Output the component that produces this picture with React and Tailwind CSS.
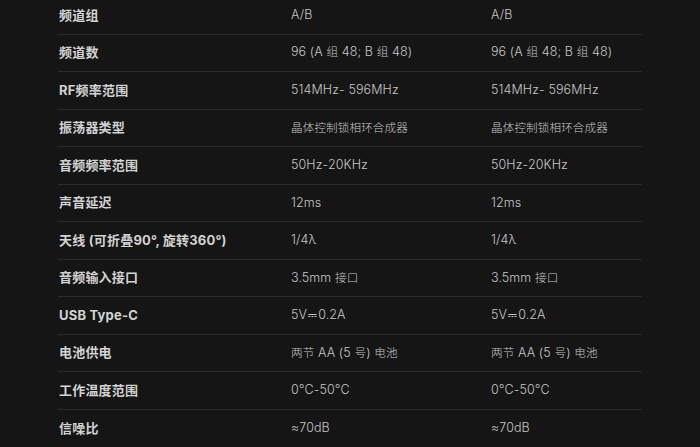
import React from "react";

const rows = [
  ["频道组", "A/B", "A/B"],
  ["频道数", "96 (A 组 48;  B 组 48)", "96 (A 组 48;  B 组 48)"],
  ["RF频率范围", "514MHz- 596MHz", "514MHz- 596MHz"],
  ["振荡器类型", "晶体控制锁相环合成器", "晶体控制锁相环合成器"],
  ["音频频率范围", "50Hz-20KHz", "50Hz-20KHz"],
  ["声音延迟", "12ms", "12ms"],
  ["天线 (可折叠90°, 旋转360°)", "1/4λ", "1/4λ"],
  ["音频输入接口", "3.5mm 接口", "3.5mm 接口"],
  ["USB Type-C", "5V⎓0.2A", "5V⎓0.2A"],
  ["电池供电", "两节 AA (5 号) 电池", "两节 AA (5 号) 电池"],
  ["工作温度范围", "0°C-50°C", "0°C-50°C"],
  ["信噪比", "≈70dB", "≈70dB"],
];

function Value({ text }) {
  const parts = text.split(/([\u4e00-\u9fff]+|⎓)/).filter((p) => p.length);
  return (
    <>
      {parts.map((p, i) =>
        p === "⎓" ? (
          <span key={i} className="font-['DejaVu_Sans'] text-[11px] px-[1px]">
            {p}
          </span>
        ) : /[\u4e00-\u9fff]/.test(p) ? (
          <span key={i} className="text-[11.6px]">
            {p}
          </span>
        ) : (
          <span key={i}>{p}</span>
        )
      )}
    </>
  );
}

export default function App() {
  return (
    <div
      className="w-[700px] h-[447px] overflow-hidden bg-[#151515]"
      style={{ fontFamily: 'Inter, "Noto Sans CJK SC", sans-serif' }}
    >
      <div className="ml-[58px] w-[584px] -mt-[3px]">
        {rows.map((r, i) => (
          <div
            key={i}
            className={
              "flex items-center h-[37.55px] " +
              (i < rows.length - 1 ? "border-b border-[#2c2c2c]" : "")
            }
          >
            <div className="w-[233px] pl-[1px] text-[13px] font-bold text-[#d2d2d2] tracking-[0.2px]">
              {r[0]}
            </div>
            <div className="w-[200px] text-[12.5px] font-light text-[#c6c6c6] tracking-[0.1px]">
              <Value text={r[1]} />
            </div>
            <div className="flex-1 text-[12.5px] font-light text-[#c6c6c6] tracking-[0.1px]">
              <Value text={r[2]} />
            </div>
          </div>
        ))}
      </div>
    </div>
  );
}
